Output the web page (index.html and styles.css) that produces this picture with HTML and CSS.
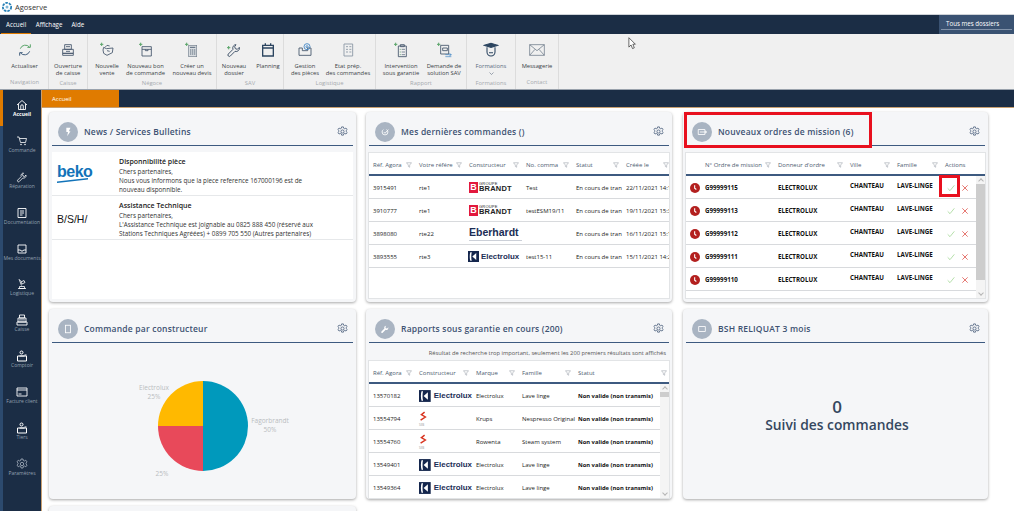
FILE: index.html
```html
<!DOCTYPE html>
<html lang="fr">
<head>
<meta charset="utf-8">
<title>Agoserve</title>
<link rel="stylesheet" href="styles.css">
</head>
<body>
<svg class="sprite" aria-hidden="true">
  <symbol id="gear" viewBox="0 0 24 24"><path fill="none" stroke="currentColor" stroke-width="1.6" stroke-linejoin="round" d="M10 2h4l.6 3 2.3 1 2.6-1.6 2.6 3.4-2.2 2 .1 1.2.1 1.2 2.1 2-2.5 3.4-2.7-1.6-2.3 1-.6 3h-4l-.6-3-2.3-1-2.7 1.6-2.5-3.4 2.1-2 .1-1.2-.1-1.2-2.2-2 2.6-3.4 2.6 1.6 2.3-1z"/><circle cx="12" cy="12" r="3.4" fill="none" stroke="currentColor" stroke-width="1.6"/></symbol>
  <symbol id="funnel" viewBox="0 0 12 12"><path fill="none" stroke="currentColor" d="M1 1.5h10L7.3 6v4.5L4.7 9V6z"/></symbol>
  <symbol id="clock" viewBox="0 0 12 12"><circle cx="6" cy="6" r="6" fill="#b3201f"/><path fill="none" stroke="#fff" stroke-width="1.3" d="M5.6 2.6v3.6l2 1.6"/></symbol>
  <symbol id="check" viewBox="0 0 12 12"><path fill="none" stroke="#8fce7e" d="M1 6.500l3.500 3.500 6.500-8"/></symbol>
  <symbol id="cross" viewBox="0 0 12 12"><path fill="none" stroke="#d9342b" d="M2 2l8 8M10 2l-8 8"/></symbol>
  <symbol id="elux" viewBox="0 0 14 14"><rect width="14" height="14" fill="#14264d"/><path fill="#fff" d="M3 1.500h1.800C4 4 4 10 4.800 12.500H3C2 10 2 4 3 1.500zM10.500 2.500v9L5.500 7z"/></symbol>
  <symbol id="sav" viewBox="0 0 24 24"><g fill="none" stroke="currentColor" stroke-width="1.500"><path d="M15 4a5 5 0 0 0-4.500 7L3.500 18a2 2 0 0 0 3 3l7-7A5 5 0 0 0 20 8l-3 3-3-1-1-3z"/></g></symbol>
  <symbol id="person" viewBox="0 0 24 24"><g fill="none" stroke="currentColor" stroke-width="2"><circle cx="11" cy="5" r="3"/><path d="M7 12h10M3 12h18v10H3zM17 10h4"/></g></symbol>
</svg>

<header class="titlebar">
  <svg class="app-logo" viewBox="0 0 12 12"><circle cx="6" cy="6" r="5" fill="none" stroke="#2b83b8" stroke-width="2.200" stroke-dasharray="3 1.200"/><circle cx="6" cy="6" r="1.800" fill="#7fb6d6"/></svg>
  <span>Agoserve</span>
</header>

<nav class="menubar">
  <a class="menu active">Accueil</a>
  <a class="menu">Affichage</a>
  <a class="menu">Aide</a>
  <div class="folders"><span>Tous mes dossiers</span></div>
</nav>

<section class="ribbon">
  <div class="group g-nav">
    <div class="items"><div class="item w36">
      <svg class="ric" viewBox="0 0 24 24"><g fill="none" stroke-width="1.500"><path stroke="#5aa469" d="M5 10a8 8 0 0 1 14-2M20 3.500V8h-4.500"/><path stroke="#44607f" d="M19 14a8 8 0 0 1-14 2M4 20.500V16h4.500"/></g></svg>
      <span>Actualiser</span></div></div>
    <div class="glabel">Navigation</div>
  </div>
  <div class="group g-cai">
    <div class="items"><div class="item w30">
      <svg class="ric" viewBox="0 0 24 24"><g fill="none" stroke="#44566c" stroke-width="1.300"><path d="M7 4h10v7H7zM4 11h16v6H4zM4 17h16v3H4zM9 7h6M9 14h6"/></g></svg>
      <span>Ouverture<br>de caisse</span></div></div>
    <div class="glabel">Caisse</div>
  </div>
  <div class="group g-neg">
    <div class="items">
      <div class="item w24"><svg class="ric" viewBox="0 0 24 24"><path fill="none" stroke="#5aa469" stroke-width="1.500" d="M4 1v5M1.500 3.500h5"/><path fill="none" stroke="#44566c" stroke-width="1.300" d="M7 8l4 2 10-1-1 7-8 4-5-3-1-5zM9 8l3-3 4 1M12 13l4 1"/></svg><span>Nouvelle<br>vente</span></div>
      <div class="item w40"><svg class="ric" viewBox="0 0 24 24"><path fill="none" stroke="#5aa469" stroke-width="1.500" d="M4 1v5M1.500 3.500h5"/><path fill="none" stroke="#44566c" stroke-width="1.300" d="M6 7h14v14H6zM6 11h14M11 11v2h4v-2"/></svg><span>Nouveau bon<br>de commande</span></div>
      <div class="item w40"><svg class="ric" viewBox="0 0 24 24"><path fill="none" stroke="#5aa469" stroke-width="1.500" d="M4 1v5M1.500 3.500h5"/><rect x="7" y="5" width="12" height="17" fill="#d8dce0" stroke="#73808e"/><path stroke="#44566c" stroke-width="1.300" d="M9 8h8M9 12h2M12 12h2M15 12h2M9 15h2M12 15h2M15 15h2M9 18h2M12 18h2M15 18h2"/></svg><span>Créer un<br>nouveau devis</span></div>
    </div>
    <div class="glabel">Négoce</div>
  </div>
  <div class="group g-sav">
    <div class="items">
      <div class="item w26"><svg class="ric sav-ic" viewBox="0 0 24 24"><path fill="none" stroke="#5aa469" stroke-width="1.500" d="M4 6v5M1.500 8.500h5"/><use href="#sav"/></svg><span>Nouveau<br>dossier</span></div>
      <div class="item w26"><svg class="ric" viewBox="0 0 24 24"><path fill="none" stroke="#2c4560" stroke-width="2" d="M4 5h16v16H4zM4 9h16M8 2v4M16 2v4"/></svg><span>Planning</span></div>
    </div>
    <div class="glabel">SAV</div>
  </div>
  <div class="group g-log">
    <div class="items">
      <div class="item w32"><svg class="ric" viewBox="0 0 24 24"><g fill="none" stroke-width="1.300"><path stroke="#44566c" d="M3 9h5v4h8v-4h5v11H3z"/><circle cx="15" cy="7" r="4.500" stroke="#3d83c4"/><circle cx="15" cy="7" r="1.500" stroke="#3d83c4"/></g></svg><span>Gestion<br>des pièces</span></div>
      <div class="item w46"><svg class="ric" viewBox="0 0 24 24"><g fill="none" stroke="#8996a3" stroke-width="1.300"><path d="M6 3h13v18H6zM9 7h3M9 11h3M9 15h3M14 7h3M14 11h3M14 15h3"/></g></svg><span>Etat prép.<br>des commandes</span></div>
    </div>
    <div class="glabel">Logistique</div>
  </div>
  <div class="group g-rap">
    <div class="items">
      <div class="item w38"><svg class="ric" viewBox="0 0 24 24"><path fill="none" stroke="#5aa469" stroke-width="1.500" d="M4 1v5M1.500 3.500h5"/><path fill="none" stroke="#44566c" stroke-width="1.300" d="M8 6h12v16H8zM11 4h6v3h-6z"/><path stroke="#5aa469" d="M10 11h2M10 15h2M10 19h2"/><path stroke="#44566c" d="M13 11h5M13 15h5M13 19h5"/></svg><span>Intervention<br>sous garantie</span></div>
      <div class="item w38"><svg class="ric" viewBox="0 0 24 24"><path fill="none" stroke="#5aa469" stroke-width="1.500" d="M4 1v5M1.500 3.500h5"/><path fill="none" stroke="#44566c" stroke-width="1.300" d="M7 5h12v13H7zM10 9h7v4h-7z"/><path stroke="#3d83c4" fill="none" d="M14 19h9M20 17l3 2-3 2M23 22h-9"/></svg><span>Demande de<br>solution SAV</span></div>
    </div>
    <div class="glabel">Rapport</div>
  </div>
  <div class="group g-for">
    <div class="items"><div class="item w36">
      <svg class="ric" viewBox="0 0 24 24"><g fill="none" stroke="#2c4560" stroke-width="1.600"><path fill="#2c4560" d="M2 5l10-3 10 3-10 3z"/><path d="M6 8v7a6 6 0 0 0 12 0V8M9 16h6"/></g></svg>
      <span class="muted">Formations<br><svg class="chev" viewBox="0 0 10 6"><path fill="none" stroke="#44566c" d="M1 1l4 4 4-4"/></svg></span></div></div>
    <div class="glabel">Formations</div>
  </div>
  <div class="group g-con">
    <div class="items"><div class="item w36">
      <svg class="ric" viewBox="0 0 24 24"><path fill="none" stroke="#73808e" stroke-width="1.200" d="M1 4h22v16H1zM1 4l11 9 11-9M1 20l8-9M23 20l-8-9"/></svg>
      <span>Messagerie</span></div></div>
    <div class="glabel">Contact</div>
  </div>
</section>

<div class="tabbar"><div class="tab">Accueil</div></div>

<div class="body">
  <aside class="sidebar">
    <a class="side active"><svg viewBox="0 0 24 24"><path fill="none" stroke="#fff" stroke-width="1.800" d="M2 12L12 3l10 9M5 10v11h14V10M9.500 21v-7a2.500 2.500 0 0 1 5 0v7"/></svg><span>Accueil</span></a>
    <a class="side"><svg viewBox="0 0 24 24"><path fill="none" stroke="#fff" stroke-width="1.600" d="M2 4h4l3 11h10l2-8H7"/><circle cx="10" cy="19" r="1.500" fill="#fff"/><circle cx="18" cy="19" r="1.500" fill="#fff"/></svg><span>Commande</span></a>
    <a class="side"><svg viewBox="0 0 24 24"><use href="#sav"/></svg><span>Réparation</span></a>
    <a class="side"><svg viewBox="0 0 24 24"><path fill="none" stroke="#fff" stroke-width="1.800" d="M4 3h16v18H4zM8 8h8M8 12h8M8 16h5"/></svg><span>Documentation</span></a>
    <a class="side"><svg viewBox="0 0 24 24"><path fill="none" stroke="#fff" stroke-width="1.800" d="M4 4h16v16H4zM4 14h5l1 2h4l1-2h5"/></svg><span>Mes documents</span></a>
    <a class="side"><svg viewBox="0 0 24 24"><path fill="none" stroke="#fff" stroke-width="1.600" d="M6 2l5 13M4 21h16M7 17h10v4H7zM10 8l6-3 2 4-6 3zM8 5l3 2"/></svg><span>Logistique</span></a>
    <a class="side"><svg viewBox="0 0 24 24"><path fill="none" stroke="#fff" stroke-width="1.800" d="M7 2h10v6H7zM4 8h16v8H4zM2 16h20v6H2zM7 11h2M11 11h2M15 11h2M7 13.500h2M11 13.500h2M15 13.500h2"/></svg><span>Caisse</span></a>
    <a class="side"><svg viewBox="0 0 24 24"><use href="#person"/></svg><span>Comptoir</span></a>
    <a class="side"><svg viewBox="0 0 24 24"><path fill="none" stroke="#fff" stroke-width="1.800" d="M2 4h20v16H2zM2 8h20M5 16h6"/></svg><span>Facture client</span></a>
    <a class="side"><svg viewBox="0 0 24 24"><use href="#person"/></svg><span>Tiers</span></a>
    <a class="side dim"><svg viewBox="0 0 24 24"><use href="#gear"/></svg><span>Paramètres</span></a>
  </aside>

  <main class="dash">
    <div class="col c1">
      <section class="card">
        <header class="chead"><span class="disc"><svg viewBox="0 0 12 12"><path fill="#fff" d="M4 1h5L7 5h2L5 11l1-5H4z"/></svg></span><h2>News / Services Bulletins</h2><svg class="cog"><use href="#gear"/></svg></header>
        <div class="news">
          <article class="nrow">
            <div class="nlogo"><span class="beko">beko</span><svg class="swoosh" viewBox="0 0 32 5"><path fill="#1273b9" d="M0 3.500L32 0v1.500L0 5z"/></svg></div>
            <div class="ntext"><h3>Disponnibilité pièce</h3><p>Chers partenaires,</p><p>Nous vous informons que la piece reference 167000196 est de<br>nouveau disponnible.</p></div>
          </article>
          <article class="nrow">
            <div class="nlogo"><span class="bsh">B/S/H/</span></div>
            <div class="ntext"><h3>Assistance Technique</h3><p>Chers partenaires,</p><p>L'Assistance Technique est joignable au 0825 888 450 (réservé aux<br>Stations Techniques Agréées) + 0899 705 550 (Autres partenaires)</p></div>
          </article>
        </div>
      </section>
      <section class="card">
        <header class="chead"><span class="disc"><svg viewBox="0 0 12 12"><rect x="3" y="1.500" width="6" height="9" fill="none" stroke="#fff"/></svg></span><h2>Commande par constructeur</h2><svg class="cog"><use href="#gear"/></svg></header>
        <div class="pie">
          <svg viewBox="0 0 300 150" class="pie-svg">
            <path fill="#0099bc" d="M151 27a45 45 0 0 1 0 90z"/>
            <path fill="#e8495a" d="M151 117a45 45 0 0 1-45-45h45z"/>
            <path fill="#ffb900" d="M106 72a45 45 0 0 1 45-45v45z"/>
            <g class="plabels">
              <text x="102" y="36">Electrolux</text><text x="102" y="45">25%</text>
              <text x="218" y="69">Fagorbrandt</text><text x="218" y="78">50%</text>
              <text x="110" y="122">25%</text>
            </g>
          </svg>
        </div>
      </section>
      <section class="card"></section>
    </div>

    <div class="col c2">
      <section class="card">
        <header class="chead"><span class="disc"><svg viewBox="0 0 12 12"><circle cx="6" cy="6" r="3.500" fill="none" stroke="#fff" stroke-dasharray="14 4"/><path fill="none" stroke="#fff" d="M4.500 6l1.500 1.500L10 3"/></svg></span><h2>Mes dernières commandes ()</h2><svg class="cog"><use href="#gear"/></svg></header>
        <div class="panel t-cmd">
          <div class="hrow">
            <div>Réf. Agora<svg><use href="#funnel"/></svg></div><div>Votre référe<svg><use href="#funnel"/></svg></div><div>Constructeur<svg><use href="#funnel"/></svg></div><div>No. comma<svg><use href="#funnel"/></svg></div><div>Statut<svg><use href="#funnel"/></svg></div><div>Créée le<svg><use href="#funnel"/></svg></div>
          </div>
          <div class="drow"><div>3915491</div><div>rte1</div><div class="lg"><span class="brandt"><b>B</b><i><small>GROUPE</small>BRANDT</i></span></div><div>Test</div><div>En cours de tran</div><div>22/11/2021 14:1</div></div>
          <div class="drow"><div>3910777</div><div>rte1</div><div class="lg"><span class="brandt"><b>B</b><i><small>GROUPE</small>BRANDT</i></span></div><div>testESM19/11</div><div>En cours de tran</div><div>19/11/2021 15:3</div></div>
          <div class="drow"><div>3898080</div><div>rte22</div><div class="lg"><span class="eber">Eberhardt</span></div><div></div><div>En cours de tran</div><div>16/11/2021 15:1</div></div>
          <div class="drow"><div>3893555</div><div>rte3</div><div class="lg"><span class="elux"><svg><use href="#elux"/></svg>Electrolux</span></div><div>test15-11</div><div>En cours de tran</div><div>15/11/2021 14:2</div></div>
        </div>
      </section>
      <section class="card">
        <header class="chead"><span class="disc"><svg viewBox="0 0 24 24"><path fill="#fff" d="M15 4a5 5 0 0 0-4.500 7L3.500 18a2 2 0 0 0 3 3l7-7A5 5 0 0 0 20 8l-3 3-3-1-1-3z"/></svg></span><h2>Rapports sous garantie en cours (200)</h2><svg class="cog"><use href="#gear"/></svg></header>
        <p class="notice">Résultat de recherche trop important, seulement les 200 premiers résultats sont affichés</p>
        <div class="panel short t-rap">
          <div class="hrow">
            <div>Réf. Agora<svg><use href="#funnel"/></svg></div><div>Constructeur<svg><use href="#funnel"/></svg></div><div>Marque<svg><use href="#funnel"/></svg></div><div>Famille<svg><use href="#funnel"/></svg></div><div>Statut<svg><use href="#funnel"/></svg></div>
          </div>
          <div class="bodywrap">
            <div class="rows">
              <div class="drow"><div>13570182</div><div class="lg"><span class="elux big"><svg><use href="#elux"/></svg>Electrolux</span></div><div>Electrolux</div><div>Lave linge</div><div class="st">Non valide (non transmis)</div></div>
              <div class="drow"><div>13554794</div><div class="lg"><span class="seb"><svg viewBox="0 0 10 14"><path fill="none" stroke="#d8331f" stroke-width="1.800" d="M7 1L3 4l5 3-6 4"/></svg><small>SEB</small></span></div><div>Krups</div><div>Nespresso Original</div><div class="st">Non valide (non transmis)</div></div>
              <div class="drow"><div>13554760</div><div class="lg"><span class="seb"><svg viewBox="0 0 10 14"><path fill="none" stroke="#d8331f" stroke-width="1.800" d="M7 1L3 4l5 3-6 4"/></svg><small>SEB</small></span></div><div>Rowenta</div><div>Steam system</div><div class="st">Non valide (non transmis)</div></div>
              <div class="drow"><div>13549401</div><div class="lg"><span class="elux big"><svg><use href="#elux"/></svg>Electrolux</span></div><div>Electrolux</div><div>Lave linge</div><div class="st">Non valide (non transmis)</div></div>
              <div class="drow"><div>13549364</div><div class="lg"><span class="elux big"><svg><use href="#elux"/></svg>Electrolux</span></div><div>Electrolux</div><div>Lave linge</div><div class="st">Non valide (non transmis)</div></div>
            </div>
            <div class="sbar thumb-small"><i></i></div>
          </div>
        </div>
      </section>
    </div>

    <div class="col c3">
      <section class="card">
        <header class="chead"><span class="disc"><svg viewBox="0 0 12 12"><path fill="none" stroke="#fff" d="M1.500 3h8v6h-8zM3.500 6h8M9.500 4.500L11.500 6l-2 1.500"/></svg></span><h2>Nouveaux ordres de mission (6)</h2><svg class="cog"><use href="#gear"/></svg></header>
        <div class="panel t-mis">
          <div class="hrow">
            <div></div><div>N° Ordre de mission<svg><use href="#funnel"/></svg></div><div>Donneur d'ordre<svg><use href="#funnel"/></svg></div><div>Ville<svg><use href="#funnel"/></svg></div><div>Famille<svg><use href="#funnel"/></svg></div><div>Actions</div>
          </div>
          <div class="bodywrap">
            <div class="rows">
              <div class="drow"><div class="ck"><svg><use href="#clock"/></svg></div><div class="st">G99999115</div><div class="st">ELECTROLUX</div><div class="st up">CHANTEAU</div><div class="st up">LAVE-LINGE</div><div class="act"><svg><use href="#check"/></svg><svg><use href="#cross"/></svg></div></div>
              <div class="drow"><div class="ck"><svg><use href="#clock"/></svg></div><div class="st">G99999113</div><div class="st">ELECTROLUX</div><div class="st up">CHANTEAU</div><div class="st up">LAVE-LINGE</div><div class="act"><svg><use href="#check"/></svg><svg><use href="#cross"/></svg></div></div>
              <div class="drow"><div class="ck"><svg><use href="#clock"/></svg></div><div class="st">G99999112</div><div class="st">ELECTROLUX</div><div class="st up">CHANTEAU</div><div class="st up">LAVE-LINGE</div><div class="act"><svg><use href="#check"/></svg><svg><use href="#cross"/></svg></div></div>
              <div class="drow"><div class="ck"><svg><use href="#clock"/></svg></div><div class="st">G99999111</div><div class="st">ELECTROLUX</div><div class="st up">CHANTEAU</div><div class="st up">LAVE-LINGE</div><div class="act"><svg><use href="#check"/></svg><svg><use href="#cross"/></svg></div></div>
              <div class="drow"><div class="ck"><svg><use href="#clock"/></svg></div><div class="st">G99999110</div><div class="st">ELECTROLUX</div><div class="st up">CHANTEAU</div><div class="st up">LAVE-LINGE</div><div class="act"><svg><use href="#check"/></svg><svg><use href="#cross"/></svg></div></div>
              <div class="drow partial"><div class="ck"><svg><use href="#clock"/></svg></div></div>
            </div>
            <div class="sbar thumb-big"><i></i></div>
          </div>
        </div>
      </section>
      <section class="card">
        <header class="chead"><span class="disc"><svg viewBox="0 0 12 12"><path fill="none" stroke="#fff" d="M2 3h8v6H2z"/></svg></span><h2>BSH RELIQUAT 3 mois</h2><svg class="cog"><use href="#gear"/></svg></header>
        <div class="kpi"><strong>0</strong><span>Suivi des commandes</span></div>
      </section>
    </div>
  </main>
</div>

<div class="mark mark-head"></div>
<div class="mark mark-check"></div>
<svg class="cursor" viewBox="0 0 12 18"><path fill="#fff" stroke="#333" d="M1 1v13l3-3 2 5 2.500-1-2-5H10z"/></svg>
</body>
</html>
```
FILE: styles.css
```css
* { box-sizing: border-box; margin: 0; padding: 0; }
html, body { width: 1014px; height: 511px; overflow: hidden; background: #fff; }
body { font-family: "Open Sans", "Noto Sans", sans-serif; font-size: 6px; color: #222; display: flex; flex-direction: column; position: relative; }
.sprite { position: absolute; width: 0; height: 0; }

.titlebar { height: 15px; display: flex; align-items: center; gap: 3px; padding-left: 2px; font-size: 7.500px; color: #333; border-bottom: 1px solid #cfd3d8; }
.app-logo { width: 10px; height: 10px; }

.menubar { height: 19px; background: #1b2d45; display: flex; align-items: stretch; padding-left: 1px; color: #fff; position: relative; font-size: 6.200px; }
.menu { padding: 1px 5px 0; display: flex; align-items: center; border-bottom: 1px solid transparent; }
.menu.active { border-bottom-color: #e07b00; }
.menu + .menu { padding: 1px 4.500px 0; }
.folders { margin-left: auto; width: 75px; background: #3a5272; padding: 0 2px 4px; display: flex; align-items: flex-end; }
.folders span { flex: 1; padding: 0 5px 1px; border-bottom: 1px solid #8293aa; line-height: 9px; }

.ribbon { height: 56px; background: #f0f0f0; border-bottom: 1px solid #9aa2ac; display: flex; padding-left: 1px; }
.group { border-right: 1px solid #dcdcdc; display: flex; flex-direction: column; }
.g-nav { width: 48px; } .g-cai { width: 39px; } .g-neg { width: 129px; } .g-sav { width: 67px; }
.g-log { width: 92px; } .g-rap { width: 91px; } .g-for { width: 49px; } .g-con { width: 43px; }
.items { flex: 1; display: flex; justify-content: center; gap: 6px; padding-top: 8px; }
.g-neg .items { justify-content: flex-start; padding-left: 7px; gap: 6.500px; }
.g-sav .items { justify-content: flex-start; padding-left: 4px; gap: 8px; }
.g-log .items { justify-content: flex-start; padding-left: 5px; gap: 4px; }
.g-rap .items { justify-content: flex-start; padding-left: 6px; gap: 5px; }
.item { display: flex; flex-direction: column; align-items: center; text-align: center; line-height: 7px; color: #3a3f46; font-size: 5.800px; }
.item span { margin-top: 5px; white-space: nowrap; }
.item .muted { color: #5a6b80; }
.ric { width: 16px; height: 16px; flex: none; }
.sav-ic { color: #44566c; }
.chev { width: 5px; height: 3px; display: inline-block; }
.w24 { width: 24px; } .w26 { width: 26px; } .w30 { width: 30px; } .w32 { width: 32px; } .w36 { width: 36px; } .w38 { width: 38px; } .w40 { width: 40px; } .w46 { width: 46px; }
.glabel { height: 13px; text-align: center; color: #a5a9ae; font-size: 5.800px; line-height: 12px; }

.tabbar { height: 18px; background: #1b2d45; padding-left: 41px; border-bottom: 1px solid #c9a071; flex: none; }
.tab { width: 78px; height: 17px; background: #e07b00; color: #fff; padding: 1px 0 0 11px; line-height: 17px; font-size: 6px; }

.body { flex: 1; display: flex; min-height: 0; margin-top: -18px; }
.sidebar { width: 42px; flex: none; background: #1b2d45; border-left: 3px solid #2c4a6e; border-right: 1px solid #c9a071; display: flex; flex-direction: column; position: relative; }
.side { height: 35.900px; flex: none; display: flex; flex-direction: column; align-items: center; padding-top: 9px; color: #93a0b0; font-size: 5px; line-height: 7px; white-space: nowrap; margin-left: -3px; width: 41px; border-left: 3px solid transparent; }
.side svg { width: 12px; height: 12px; color: #fff; flex: none; }
.side.active { border-left-color: #e07b00; color: #fff; font-weight: 700; }
.side.dim svg { color: #a9b4c2; }

.dash { flex: 1; display: flex; align-items: flex-start; padding: 22px 0 0 7px; gap: 10px; overflow: hidden; height: 421px; }
.col { display: flex; flex-direction: column; gap: 7px; flex: none; }
.c1 { width: 307px; } .c2 { width: 306px; } .c3 { width: 305px; margin-left: 1px; }
.card { height: 190px; flex: none; background: #f5f6f8; border-radius: 4px; box-shadow: 0 1px 3px rgba(0,0,0,.35); padding: 0 3px; display: flex; flex-direction: column; }
.chead { height: 34px; flex: none; display: flex; align-items: center; gap: 6px; border-bottom: 1px solid #3d5a80; padding: 6px 5px 0 6px; margin-bottom: 6px; }
.disc { width: 20px; height: 20px; border-radius: 50%; background: #a9b4c2; display: flex; align-items: center; justify-content: center; flex: none; }
.disc svg { width: 10px; height: 10px; }
.chead h2 { flex: 1; font-size: 8.500px; font-weight: 600; color: #3d5272; letter-spacing: .2px; white-space: nowrap; }
.cog { width: 11px; height: 11px; color: #3d5272; flex: none; }

.news { background: #fff; flex: 1; margin-bottom: 3px; }
.nrow { height: 44px; display: flex; border-bottom: 1px solid #e6e8ea; }
.nlogo { width: 67px; padding-left: 5px; display: flex; flex-direction: column; justify-content: center; flex: none; }
.beko { font-family: "Liberation Sans", sans-serif; font-size: 16px; line-height: 13px; font-weight: 700; color: #1273b9; letter-spacing: -.5px; }
.swoosh { width: 31px; height: 5px; display: block; }
.bsh { font-family: "Liberation Sans", sans-serif; font-size: 10.500px; padding-top: 2px; color: #111; }
.ntext { padding-top: 6px; }
.ntext h3 { font-size: 7px; line-height: 8px; font-weight: 600; color: #222; margin-bottom: 2px; }
.ntext p { font-size: 6.300px; line-height: 8.900px; color: #333; white-space: nowrap; }

.pie { flex: 1; position: relative; }
.pie-svg { width: 300px; height: 150px; display: block; margin-top: 5px; overflow: visible; }
.plabels text { font-size: 6.500px; fill: #b9bcc0; text-anchor: middle; }

.panel { background: #fff; height: 147px; margin: 0 -1px; border: 1px solid #e2e4e6; overflow: hidden; display: flex; flex-direction: column; }
.panel.short { height: 139px; }
.hrow, .drow { display: grid; flex: none; }
.hrow { height: 23px; border-bottom: 2px solid #3d5a80; color: #4d5c70; align-items: center; padding-top: 3px; }
.hrow > div { position: relative; padding-left: 4px; white-space: nowrap; }
.hrow svg { position: absolute; right: 3px; top: 50%; margin-top: -3px; width: 6px; height: 6px; color: #8f97a1; }
.drow { height: 23px; border-bottom: 1px solid #d8dadd; align-items: center; padding-top: 1px; }
.drow > div { padding-left: 4px; white-space: nowrap; }
.t-cmd .hrow, .t-cmd .drow { grid-template-columns: 46px 50px 57px 50px 50px 50px; }
.t-rap .hrow { grid-template-columns: 46px 57px 46px 56px 96px; }
.t-rap .drow { grid-template-columns: 46px 57px 46px 56px 1fr; }
.t-mis .hrow { grid-template-columns: 15px 73px 72px 47px 48px 46px; }
.t-mis .drow { grid-template-columns: 15px 73px 72px 47px 48px 37px; }
.t-mis .st { font-size: 6.200px; }
.bodywrap { flex: 1; display: flex; min-height: 0; overflow: hidden; }
.rows { flex: 1; min-width: 0; }
.sbar { width: 9px; flex: none; background: #f4f4f4; position: relative; }
.sbar::before, .sbar::after { content: ""; position: absolute; left: 3px; width: 3px; height: 3px; border-left: 1px solid #b5b5b5; border-top: 1px solid #b5b5b5; transform: rotate(45deg); }
.sbar::before { top: 3px; }
.sbar::after { bottom: 3px; transform: rotate(225deg); }
.sbar i { display: block; background: #cdcdcd; position: absolute; left: 0; right: 0; }
.thumb-small i { top: 8px; height: 5px; }
.thumb-big i { top: 8px; height: 96px; }
.st { font-weight: 700; color: #111; font-size: 5.800px; }
.up { align-self: start; padding-top: 4px; }
.ck { display: flex; align-items: center; padding-left: 4px !important; }
.ck svg { width: 10px; height: 10px; }
.act { display: flex; align-items: center; gap: 6px; padding-left: 6px !important; }
.act svg { width: 8px; height: 8px; }
.partial { padding-top: 2px; }

.brandt { display: flex; align-items: center; gap: 1px; }
.brandt b { width: 9px; height: 11px; background: #e2183d; color: #fff; font: 700 9px/11px "Liberation Sans", sans-serif; text-align: center; }
.brandt i { font: 700 7.500px/6.500px "Liberation Sans", sans-serif; color: #222; display: flex; flex-direction: column; letter-spacing: .2px; }
.brandt small { font-size: 4px; line-height: 4px; font-weight: 400; }
.eber { display: block; font: 700 10.500px/11px "Liberation Sans", sans-serif; color: #1b2d55; padding-bottom: 2px; border-bottom: 1px solid #ccd0d8; }
.elux { display: flex; align-items: center; gap: 2px; font: 700 7.900px/12px "Liberation Sans", sans-serif; color: #1b2d55; margin-left: -1px; }
.elux svg { width: 11px; height: 11px; }
.elux.big { margin-left: 0; gap: 3px; }
.elux.big svg { width: 12px; height: 12px; }
.seb { display: flex; flex-direction: column; width: 10px; line-height: 4px; }
.seb svg { width: 8px; height: 12px; }
.seb small { font-size: 3px; color: #999; }

.notice { font-size: 5.750px; text-align: right; color: #555; margin: 0 3px 0 0; height: 11px; line-height: 9px; white-space: nowrap; }
.kpi { flex: 1; display: flex; flex-direction: column; align-items: center; padding: 49px 0 0 3px; color: #34475f; }
.kpi strong { font-size: 17px; font-weight: 600; line-height: 18px; }
.kpi span { font-size: 13.800px; font-weight: 600; line-height: 18px; }

.mark { position: absolute; border: 3px solid #e8101e; }
.mark-head { left: 684px; top: 112px; width: 188px; height: 36px; }
.mark-check { left: 939px; top: 175px; width: 21px; height: 22px; }
.cursor { position: absolute; left: 628px; top: 37px; width: 9px; height: 13px; }
```
